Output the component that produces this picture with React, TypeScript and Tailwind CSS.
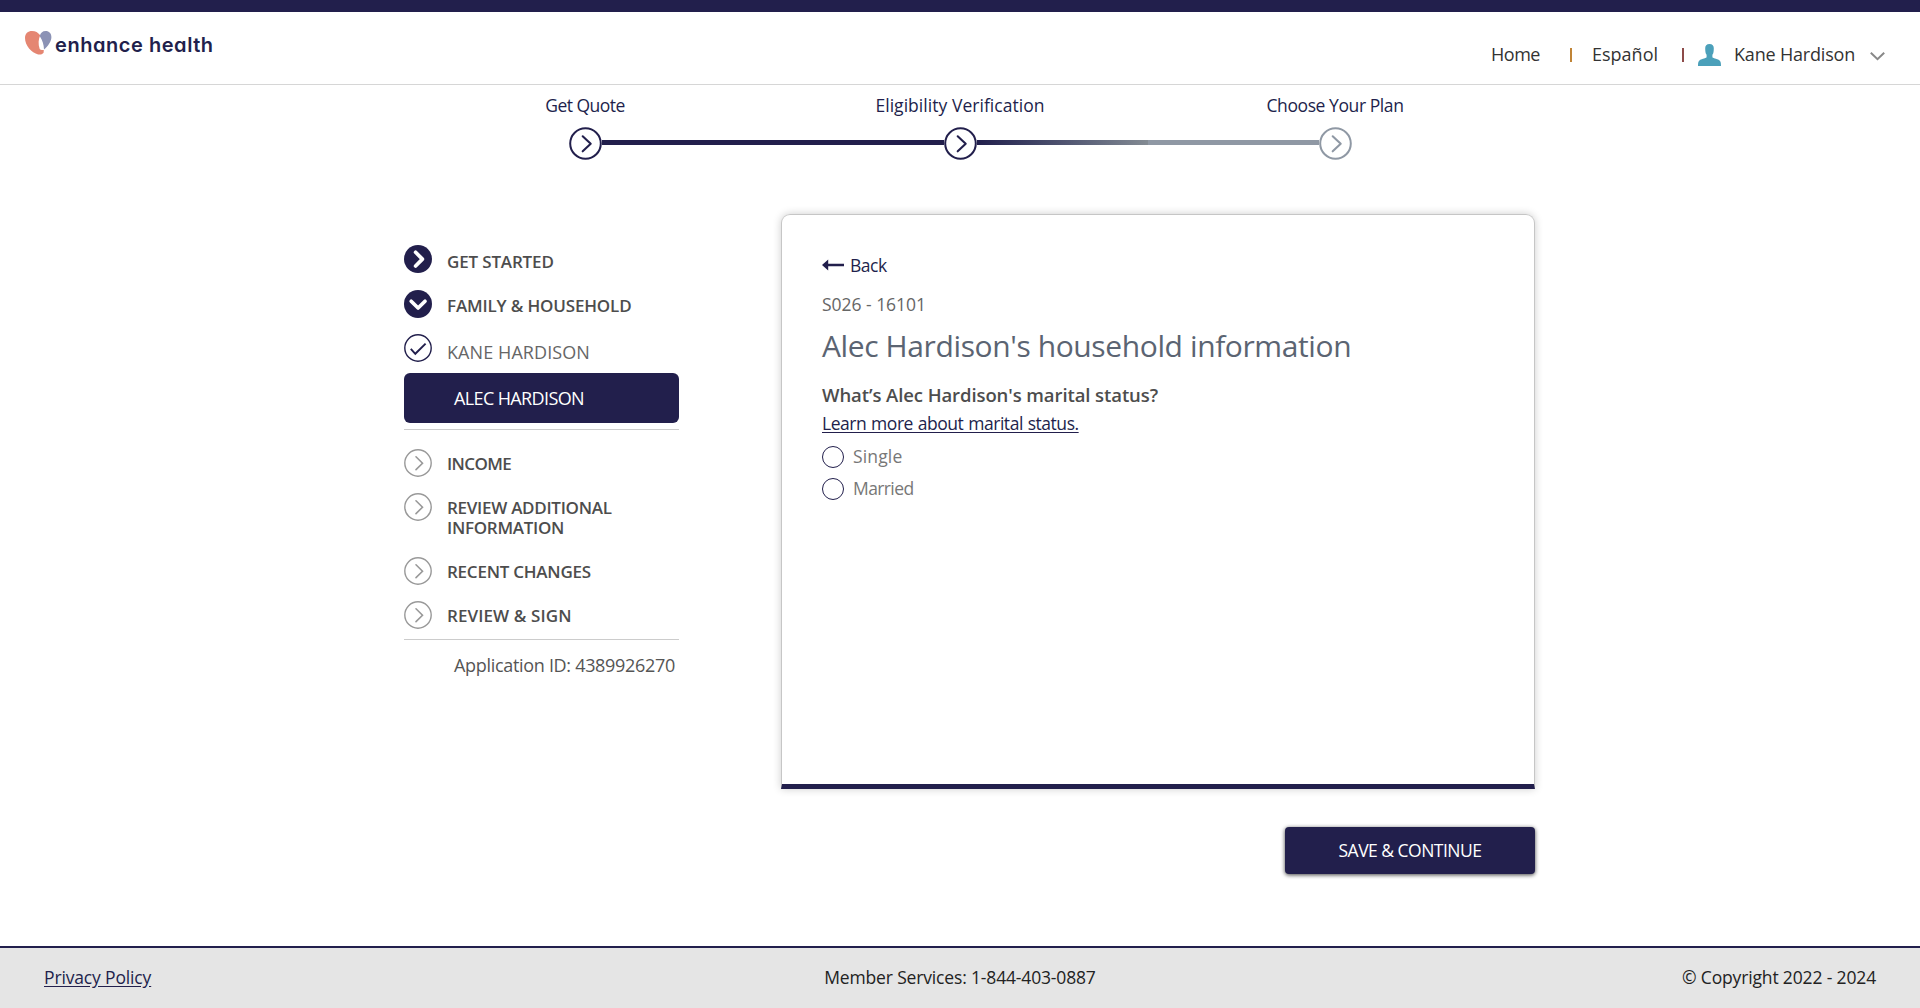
import type { ReactNode } from 'react';

function Chevron({ className, width = 1.6, down = false }: { className: string; width?: number; down?: boolean }) {
  return (
    <svg viewBox="0 0 28 28" className={className} fill="none" stroke="currentColor" strokeWidth={width} strokeLinecap="round" strokeLinejoin="round">
      <path d={down ? 'M7.2 11.2l6.9 6.8 6.9-6.8' : 'M11.6 7.2l6.8 6.9-6.8 6.9'} />
    </svg>
  );
}

function NavIcon({ kind }: { kind: 'done' | 'open' | 'check' | 'todo' }) {
  if (kind === 'done' || kind === 'open') {
    return (
      <span className="block size-7 shrink-0 rounded-full bg-[#221f4c] text-white">
        <Chevron className="size-7" width={3.7} down={kind === 'open'} />
      </span>
    );
  }
  return (
    <svg viewBox="0 0 28 28" fill="none" className={kind === 'check' ? 'size-7 shrink-0 text-[#221f4c]' : 'size-7 shrink-0 text-[#999]'} stroke="currentColor" strokeWidth="1.4">
      <circle cx="14" cy="14" r="13.2" />
      {kind === 'check' ? (
        <path d="M6.8 14.8l4.5 5 10.3-10.2" strokeWidth="1.9" />
      ) : (
        <path d="M12 7.8l6.5 6.4-6.5 6.4" strokeWidth="1.6" strokeLinecap="round" />
      )}
    </svg>
  );
}

function NavRow({ kind, row, label, children }: { kind: 'done' | 'open' | 'check' | 'todo'; row: string; label: string; children: ReactNode }) {
  return (
    <li className={`flex gap-[15px] ${row}`}>
      <NavIcon kind={kind} />
      <span className={`whitespace-nowrap leading-5 ${label}`}>{children}</span>
    </li>
  );
}

function Step({ label, spacing, left, right, tone }: { label: string; spacing: string; left: string; right: string; tone: string }) {
  return (
    <li className="flex w-[375px] flex-col items-center">
      <span className={`text-[17.5px] leading-5 text-[#221f4c] ${spacing}`}>{label}</span>
      <div className="mt-3 flex w-full items-center">
        <span className={`-mt-0.5 h-[5px] flex-1 ${left}`} />
        <svg viewBox="0 0 33 33" className={`size-[33px] ${tone}`} fill="none" stroke="currentColor">
          <circle cx="16.5" cy="16.5" r="15.3" strokeWidth="2" />
          <path d="M13.7 9.3l8 7.5-8 7.5" strokeWidth="2.1" strokeLinecap="round" strokeLinejoin="round" />
        </svg>
        <span className={`-mt-0.5 h-[5px] flex-1 ${right}`} />
      </div>
    </li>
  );
}

function Radio({ label, spacing }: { label: string; spacing: string }) {
  return (
    <label className="flex h-8 items-start gap-[9px]">
      <span className="size-[22px] rounded-full border border-[#221f4c]" />
      <span className={`text-[17.5px] leading-5 text-[#777] ${spacing}`}>{label}</span>
    </label>
  );
}

export default function App() {
  return (
    <div className="flex h-[1008px] w-full flex-col bg-white font-['Open_Sans',sans-serif]">
      <header className="flex h-[85px] shrink-0 justify-between border-b border-t-12 border-b-[#d6d6d6] border-t-[#221f4c]">
        <div className="flex pl-[25px] pt-[19px]">
          <svg viewBox="0 0 27 24" className="h-6 w-[27px]">
            <path d="M0 7C0 2.5 3 0 7 0c3.600 0 6 1.400 8.200 4.300-1.800 4-2.200 8.700-.5 13.700.8 1 2.600 1.300 4.100 1l-.2 2.700c-1.200 1.600-3.500 2.200-5.400 1.800C6.500 21.800 0 14.500 0 7z" fill="#e58672" />
            <path d="M14.800 5.200C15.300 2 17.500 0 20.700 0c3.400 0 5.700 2.400 5.700 6 0 4.400-3.200 9-7.400 12.500-.2-4.700-1.300-9.200-4.200-13.300z" fill="#8b92b5" />
          </svg>
          <span className="ml-[3px] mt-[2px] h-6 whitespace-nowrap font-['Inter',sans-serif] text-[20px] font-semibold leading-6 tracking-[0.55px] text-[#221f4c] [font-feature-settings:'cv11']">enhance health</span>
        </div>
        <nav className="flex items-start pr-[35px] pt-8 text-[18px] leading-6 text-[#333]">
          <a className="-mt-0.5 w-[79px] tracking-[-0.47px]">Home</a>
          <span className="mr-5 mt-1 h-[14px] w-[2px] bg-[#c08436]" />
          <a className="-mt-0.5 w-[90px]">Español</a>
          <span className="mt-1 h-[14px] w-[2px] bg-[#8d4b49]" />
          <svg viewBox="0 0 23 22" className="ml-[14px] h-[22px] w-[23px]" fill="#4ba0ba">
            <path d="M11.500 0C8.500 0 7.200 1.700 7.200 4.200c0 3 .3 5.200 1.400 6.600v2.400c-1 1.200-6 1.700-7.500 3.500C.2 17.800 0 19.500 0 22h23c0-2.500-.2-4.200-1.100-5.300-1.500-1.800-6.500-2.300-7.500-3.500v-2.400c1.100-1.400 1.400-3.600 1.400-6.600C15.800 1.700 14.500 0 11.500 0z" />
          </svg>
          <span className="-mt-0.5 ml-[13px] w-[136px] tracking-[-0.19px]">Kane Hardison</span>
          <svg viewBox="0 0 15 9" className="mt-2 h-[9px] w-[15px]" fill="none" stroke="#888" strokeWidth="2">
            <path d="M.8.8l6.700 6.400L14.200.8" />
          </svg>
        </nav>
      </header>

      <ol className="mt-[10px] flex h-[65px] shrink-0 justify-center">
        <Step label="Get Quote" spacing="tracking-[-0.53px]" left="bg-transparent" right="bg-[#221f4c]" tone="text-[#221f4c]" />
        <Step label="Eligibility Verification" spacing="tracking-[0.04px]" left="bg-[#221f4c]" right="bg-linear-to-r from-[#221f4c] to-[#838b93]" tone="text-[#221f4c]" />
        <Step label="Choose Your Plan" spacing="tracking-[-0.42px]" left="bg-[#8f98a4]" right="bg-transparent" tone="text-[#8f98a4]" />
      </ol>

      <main className="flex flex-1 pl-[404px] pt-[54px]">
        <aside className="w-[275px] pt-[31px]">
          <ul className="text-[17px] font-semibold text-[#4d4d4d]">
            <NavRow kind="done" row="h-[45px]" label="mt-[7px] tracking-[-0.16px]">GET STARTED</NavRow>
            <NavRow kind="open" row="h-11" label="mt-[6px] tracking-[-0.16px]">FAMILY &amp; HOUSEHOLD</NavRow>
            <NavRow kind="check" row="h-[39px]" label="mt-2 text-[18px] font-normal tracking-[0.08px] text-[#666]">KANE HARDISON</NavRow>
            <li className="flex h-[50px] items-center rounded-md bg-[#221f4c] pl-[50px] text-[18px] font-normal tracking-[-0.62px] text-white">ALEC HARDISON</li>
          </ul>
          <ul className="mt-[6px] border-y border-[#ccc] pt-[19px] text-[17px] font-semibold text-[#4d4d4d]">
            <NavRow kind="todo" row="h-11" label="mt-[5px] tracking-[-0.6px]">INCOME</NavRow>
            <NavRow kind="todo" row="h-16" label="mt-[5px] tracking-[-0.28px]">REVIEW ADDITIONAL<br />INFORMATION</NavRow>
            <NavRow kind="todo" row="h-11" label="mt-[5px] tracking-[-0.24px]">RECENT CHANGES</NavRow>
            <NavRow kind="todo" row="h-[38px]" label="mt-[5px] tracking-[0.1px]">REVIEW &amp; SIGN</NavRow>
          </ul>
          <p className="mt-[15px] whitespace-nowrap pl-[50px] text-[18px] leading-5 tracking-[-0.31px] text-[#555]">Application ID: 4389926270</p>
        </aside>

        <div className="ml-[102px] flex w-[754px] flex-col items-end">
          <section className="flex h-[575px] w-full flex-col items-start rounded-t-[9px] border border-b-5 border-[#c6c6c6] border-b-[#221f4c] pl-10 pt-10 shadow-[0_0_9px_rgba(0,0,0,0.2)]">
            <a className="flex h-5 items-center gap-[6px] text-[17.5px] leading-5 tracking-[-0.5px] text-[#221f4c]">
              <svg viewBox="0 0 22 12" className="h-3 w-[22px]" fill="#221f4c">
                <path d="M0 6L6.200 .5V4.700H22V7.300H6.200V11.500z" />
              </svg>
              Back
            </a>
            <p className="mt-[19px] text-[17.5px] leading-5 tracking-[-0.03px] text-[#666]">S026 - 16101</p>
            <h1 className="mt-3 h-10 whitespace-nowrap text-[30px] leading-10 tracking-[-0.39px] text-[#5b6472]">Alec Hardison's household information</h1>
            <h2 className="mt-[17px] whitespace-nowrap text-[18.5px] font-semibold leading-6 tracking-[-0.09px] text-[#4d4d4d]">What’s Alec Hardison's marital status?</h2>
            <a className="mb-[13px] mt-[6px] whitespace-nowrap text-[17.5px] leading-5 tracking-[-0.47px] text-[#221f4c] underline underline-offset-2 [word-spacing:0.8px]">Learn more about marital status.</a>
            <Radio label="Single" spacing="tracking-[0.15px]" />
            <Radio label="Married" spacing="tracking-[-0.6px]" />
          </section>
          <button className="mt-[38px] h-[47px] w-[250px] rounded-[4px] bg-[#221f4c] text-[17.5px] tracking-[-0.51px] text-white shadow-[0_1px_4px_rgba(0,0,0,0.75)]">SAVE &amp; CONTINUE</button>
        </div>
      </main>

      <footer className="flex h-[62px] shrink-0 items-start justify-between border-t-2 border-[#221f4c] bg-[#e5e5e5] px-11 pt-[19px] text-[17.5px] leading-5 text-[#222]">
        <a className="w-[195px] tracking-[-0.15px] text-[#221f4c] underline underline-offset-2">Privacy Policy</a>
        <span className="tracking-[-0.16px]">Member Services: 1-844-403-0887</span>
        <span className="w-[195px] whitespace-nowrap text-right tracking-[-0.15px]">© Copyright 2022 - 2024</span>
      </footer>
    </div>
  );
}
